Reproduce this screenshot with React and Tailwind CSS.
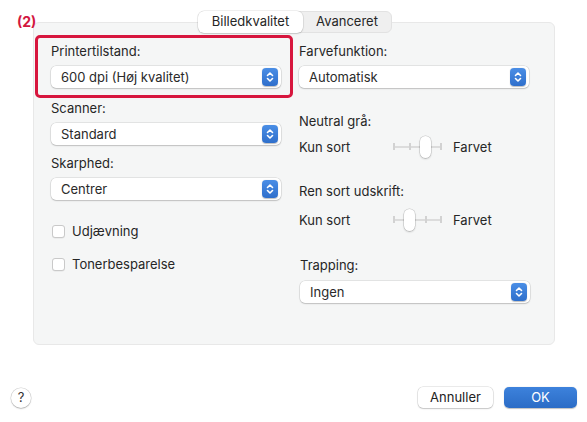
import React from 'react';

const Stepper = () => (
  <span className="flex h-[18px] w-[16px] items-center justify-center rounded-[4px] bg-gradient-to-b from-[#4a8ee6] to-[#2f6fcb] shadow-[0_0.5px_1px_rgba(0,0,0,0.25)]">
    <svg width="8" height="12" viewBox="0 0 8 12" fill="none" stroke="white" strokeWidth="1.6" strokeLinecap="round" strokeLinejoin="round">
      <path d="M1.5 4.5 L4 2 L6.5 4.5" />
      <path d="M1.5 7.5 L4 10 L6.5 7.5" />
    </svg>
  </span>
);

const Select = ({ value, className = '' }) => (
  <div className={`flex h-[22px] w-[230px] items-center justify-between rounded-[5px] bg-white pl-[10px] pr-[3px] shadow-[0_0_0_0.5px_rgba(0,0,0,0.14),0_1px_1.5px_rgba(0,0,0,0.16)] ${className}`}>
    <span className="leading-4 text-[#2a2a2a]">{value}</span>
    <Stepper />
  </div>
);

const Checkbox = ({ label, className = '' }) => (
  <div className={`flex h-4 items-center ${className}`}>
    <span className="ml-[1px] h-[13px] w-[13px] rounded-[3px] border border-[#c9c9c9] bg-white shadow-[0_0.5px_0.5px_rgba(0,0,0,0.08)]" />
    <span className="ml-[7px] leading-4">{label}</span>
  </div>
);

// position = tick index 0..3
const Slider = ({ position, className = '' }) => {
  const ticks = [0, 16, 32, 47];
  return (
    <div className={`flex h-[22px] items-center ${className}`}>
      <span className="w-[94px] leading-4">Kun sort</span>
      <div className="relative h-[22px] w-[48px]">
        <div className="absolute left-0 right-0 top-[10px] h-[1.5px] bg-[#dcdcdc]" />
        {ticks.map((x) => (
          <div key={x} className="absolute top-[7px] h-[7px] w-[1.5px] bg-[#d2d2d2]" style={{ left: x }} />
        ))}
        <div
          className="absolute top-0 h-[22px] w-[11px] rounded-full bg-white shadow-[0_0_0_0.5px_rgba(0,0,0,0.18),0_1px_2px_rgba(0,0,0,0.2)]"
          style={{ left: ticks[position] - 5 }}
        />
      </div>
      <span className="ml-[12px] leading-4">Farvet</span>
    </div>
  );
};

export default function App() {
  return (
    <div className="relative h-[422px] w-[587px] overflow-hidden bg-white text-[13px] text-[#262626] font-['Inter','Liberation_Sans',sans-serif]">
      {/* Tabs */}
      <div className="relative z-10 ml-[198px] mt-[11px] flex h-[22px] w-[194px] rounded-[6px] border border-[#e2e2e2] bg-[#efefef]">
        <div className="-ml-px -mt-px flex h-[22px] w-[105px] items-center justify-center rounded-[6px] bg-white shadow-[0_0_0_0.5px_rgba(0,0,0,0.12),0_1px_1.5px_rgba(0,0,0,0.15)]">
          Billedkvalitet
        </div>
        <div className="flex flex-1 items-center justify-center">Avanceret</div>
      </div>

      {/* Panel */}
      <div className="-mt-[11px] ml-[33px] flex h-[323px] w-[522px] gap-[18px] rounded-[6px] border border-[#e8e8e8] bg-[#f5f6f6] pl-[17px] pt-[20px]">
        <div className="flex w-[230px] flex-col">
          <span className="leading-4">Printertilstand:</span>
          <Select value="600 dpi (Høj kvalitet)" className="mt-[7px]" />
          <span className="mt-[12px] leading-4">Scanner:</span>
          <Select value="Standard" className="mt-[7px]" />
          <span className="mt-[10px] leading-4">Skarphed:</span>
          <Select value="Centrer" className="mt-[7px]" />
          <Checkbox label="Udjævning" className="mt-[23px]" />
          <Checkbox label="Tonerbesparelse" className="mt-[17px]" />
        </div>
        <div className="flex w-[230px] flex-col">
          <span className="leading-4">Farvefunktion:</span>
          <Select value="Automatisk" className="mt-[7px]" />
          <span className="mt-[25px] leading-4">Neutral grå:</span>
          <Slider position={2} className="mt-[7px]" />
          <span className="mt-[25px] leading-4">Ren sort udskrift:</span>
          <Slider position={1} className="mt-[10px]" />
          <span className="ml-[1px] mt-[26px] leading-4">Trapping:</span>
          <Select value="Ingen" className="mt-[8px] ml-[1px] w-[229px]" />
        </div>
      </div>

      {/* Footer */}
      <div className="mt-[42px] flex items-center pl-[11px] pr-[10px]">
        <button className="flex h-[20px] w-[20px] items-center justify-center rounded-full bg-white text-[13px] text-[#333] shadow-[0_0_0_0.5px_rgba(0,0,0,0.18),0_1px_1.5px_rgba(0,0,0,0.18)]">
          ?
        </button>
        <button className="ml-auto flex h-[21px] w-[75px] items-center justify-center rounded-[5px] bg-white text-[#222] shadow-[0_0_0_0.5px_rgba(0,0,0,0.16),0_1px_1.5px_rgba(0,0,0,0.16)]">
          Annuller
        </button>
        <button className="ml-[11px] flex h-[21px] w-[73px] items-center justify-center rounded-[5px] bg-gradient-to-b from-[#3d82dc] to-[#2b6cc6] text-white shadow-[0_0.5px_1px_rgba(0,0,0,0.25)]">
          OK
        </button>
      </div>

      {/* Annotation overlay */}
      <span className="absolute left-[17px] top-[13px] text-[14px] font-bold leading-[18px] text-[#d3173f]">(2)</span>
      <div className="pointer-events-none absolute left-[35px] top-[35px] h-[63px] w-[258px] rounded-[5px] border-[3px] border-[#d7163e]" />
    </div>
  );
}
